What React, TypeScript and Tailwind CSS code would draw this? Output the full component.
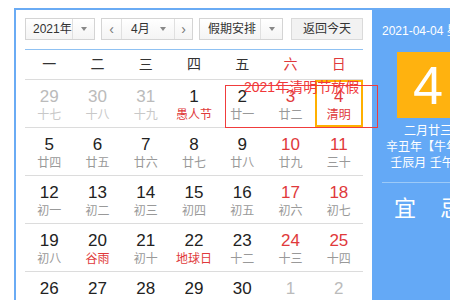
import React from "react";

type Day = {
  n: number;
  l: string;
  muted?: boolean;
  red?: boolean;
  fest?: boolean;
  today?: boolean;
};

const weeks: Day[][] = [
  [
    { n: 29, l: "十七", muted: true },
    { n: 30, l: "十八", muted: true },
    { n: 31, l: "十九", muted: true },
    { n: 1, l: "愚人节", fest: true },
    { n: 2, l: "廿一" },
    { n: 3, l: "廿二", red: true },
    { n: 4, l: "清明", red: true, fest: true, today: true },
  ],
  [
    { n: 5, l: "廿四" },
    { n: 6, l: "廿五" },
    { n: 7, l: "廿六" },
    { n: 8, l: "廿七" },
    { n: 9, l: "廿八" },
    { n: 10, l: "廿九", red: true },
    { n: 11, l: "三十", red: true },
  ],
  [
    { n: 12, l: "初一" },
    { n: 13, l: "初二" },
    { n: 14, l: "初三" },
    { n: 15, l: "初四" },
    { n: 16, l: "初五" },
    { n: 17, l: "初六", red: true },
    { n: 18, l: "初七", red: true },
  ],
  [
    { n: 19, l: "初八" },
    { n: 20, l: "谷雨", fest: true },
    { n: 21, l: "初十" },
    { n: 22, l: "地球日", fest: true },
    { n: 23, l: "十二" },
    { n: 24, l: "十三", red: true },
    { n: 25, l: "十四", red: true },
  ],
  [
    { n: 26, l: "十五" },
    { n: 27, l: "十六" },
    { n: 28, l: "十七" },
    { n: 29, l: "十八" },
    { n: 30, l: "十九" },
    { n: 1, l: "二十", muted: true },
    { n: 2, l: "廿一", muted: true },
  ],
];

const weekNames = ["一", "二", "三", "四", "五", "六", "日"];

const Caret = () => (
  <span className="inline-block w-0 h-0 border-l-[3.5px] border-r-[3.5px] border-t-[4px] border-l-transparent border-r-transparent border-t-[#888]" />
);

const DayCell = ({ d }: { d: Day }) => {
  const numColor = d.muted ? "text-[#bbb]" : d.red ? "text-[#e0393b]" : "text-[#222]";
  const lunarColor = d.muted ? "text-[#c8c8c8]" : d.fest ? "text-[#e0393b]" : "text-[#999]";
  return (
    <div
      className={
        "flex flex-col items-center h-[47px] " +
        (d.today ? "border-2 border-[#ffb000] pt-[5px]" : "pt-[7px]")
      }
    >
      <span className={"text-[17px] leading-[20px] " + numColor}>{d.n}</span>
      <span className={"text-[12px] leading-[16px] " + lunarColor}>{d.l}</span>
    </div>
  );
};

export default function App() {
  return (
    <div
      className="w-[450px] h-[300px] overflow-hidden bg-white pl-[14px] pt-[8px]"
      style={{ fontFamily: '"Liberation Sans", "Noto Sans CJK SC", sans-serif' }}
    >
      <div className="flex border-l-2 border-t-2 border-[#6aabf4] h-[400px]">
        {/* calendar side */}
        <div className="relative w-[356px] shrink-0 px-[9px] pt-[8px]">
          <div className="flex items-center h-[22px] text-[12px] text-[#333] whitespace-nowrap">
            <div className="flex h-full w-[70px] border border-[#d4d4d4] bg-gradient-to-b from-white to-[#f4f4f4]">
              <span className="flex-1 flex items-center pl-[7px]">2021年</span>
              <span className="w-[22px] flex items-center justify-center border-l border-[#e0e0e0]">
                <Caret />
              </span>
            </div>
            <div className="flex h-full w-[92px] ml-[6px] border border-[#d4d4d4] bg-gradient-to-b from-white to-[#f4f4f4]">
              <span className="w-[20px] flex items-center justify-center border-r border-[#e0e0e0] text-[#777] text-[14px]">‹</span>
              <span className="flex-1 flex items-center pl-[9px]">4月</span>
              <span className="w-[14px] flex items-center justify-start">
                <Caret />
              </span>
              <span className="w-[18px] flex items-center justify-center border-l border-[#e0e0e0] text-[#777] text-[14px]">›</span>
            </div>
            <div className="flex h-full w-[84px] ml-[6px] border border-[#d4d4d4] bg-gradient-to-b from-white to-[#f4f4f4]">
              <span className="flex-1 flex items-center pl-[8px]">假期安排</span>
              <span className="w-[22px] flex items-center justify-center border-l border-[#e0e0e0]">
                <Caret />
              </span>
            </div>
            <div className="flex items-center justify-center h-full w-[72px] ml-[8px] border border-[#dadada] bg-[#f2f2f2]">
              返回今天
            </div>
          </div>

          <div className="mt-[9px] border-t border-[#8fc1f2]" />
          <div className="grid grid-cols-7 h-[30px] items-center text-[14px] border-b border-[#dcdcdc]">
            {weekNames.map((w, i) => (
              <span key={w} className={"text-center " + (i >= 5 ? "text-[#e0393b]" : "text-[#333]")}>
                {w}
              </span>
            ))}
          </div>

          {weeks.map((row, ri) => (
            <div key={ri} className="grid grid-cols-7 border-b border-[#dcdcdc]">
              {row.map((d, ci) => (
                <DayCell key={ci} d={d} />
              ))}
            </div>
          ))}

          {/* annotation over the holiday */}
          <div className="absolute left-[209px] top-[75px] w-[153px] h-[43px] ring-1 ring-inset ring-[#f03c3c]" />
          <div className="absolute left-[228px] top-[68px] text-[14px] leading-[18px] text-[#f0383a] whitespace-nowrap">
            2021年清明节放假
          </div>
        </div>

        {/* info side */}
        <div className="w-[112px] shrink-0 bg-[#64a9f6] text-white flex flex-col items-center">
          <div className="self-start pl-[10px] pt-[13px] text-[12px] leading-[16px] whitespace-nowrap">
            2021-04-04 星期日
          </div>
          <div className="mt-[13px] w-[62px] h-[66px] bg-[#ffb20f] flex items-center justify-center text-[54px] leading-none">
            4
          </div>
          <div className="mt-[5px] text-[12px] leading-[16px]">二月廿三</div>
          <div className="text-[12px] leading-[16px] whitespace-nowrap">辛丑年【牛年】</div>
          <div className="text-[12px] leading-[16px] whitespace-nowrap">壬辰月 壬午日</div>
          <div className="mt-[11px] w-[92px] border-t border-[#9ccaf8]" />
          <div className="mt-[14px] flex gap-[24px] text-[22px] leading-[24px]">
            <span>宜</span>
            <span>忌</span>
          </div>
        </div>
      </div>
    </div>
  );
}
